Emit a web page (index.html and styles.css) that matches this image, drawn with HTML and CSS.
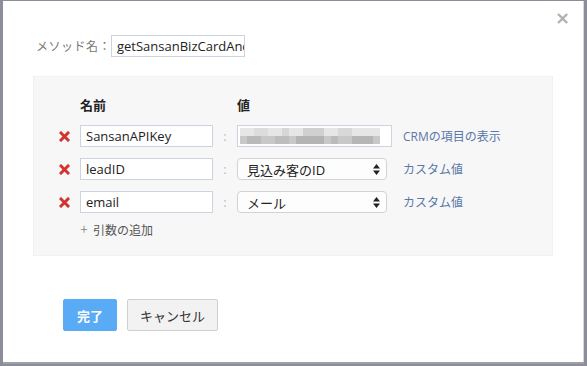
FILE: index.html
```html
<!DOCTYPE html>
<html lang="ja">
<head>
  <meta charset="utf-8" />
  <title>メソッドの編集</title>
  <link rel="stylesheet" href="styles.css">
</head>
<body>
  <div class="modal">
    <span class="close">&times;</span>

    <div class="method">
      <label class="method-label">メソッド名：</label>
      <div class="text-input method-input">getSansanBizCardAndUpdateLead</div>
    </div>

    <div class="args">
      <div class="arg-head">
        <span class="col-name">名前</span>
        <span class="col-value">値</span>
      </div>

      <div class="arg-row">
        <span class="remove"><svg width="11" height="11" viewBox="0 0 11 11"><path d="M2 2 L9 9 M9 2 L2 9" stroke="#d3322f" stroke-width="3" stroke-linecap="square"/></svg></span>
        <div class="text-input name-input">SansanAPIKey</div>
        <span class="colon">:</span>
        <div class="text-input value-input blurred">
          <svg width="140" height="16" viewBox="0 0 140 16">
            <rect x="0" y="0" width="140" height="8" fill="#e6e6e6"/>
            <rect x="14" y="0" width="14" height="8" fill="#dcdcdc"/>
            <rect x="42" y="0" width="7" height="8" fill="#d6d6d6"/>
            <rect x="63" y="0" width="21" height="8" fill="#d0d0d0"/>
            <rect x="98" y="0" width="14" height="8" fill="#d8d8d8"/>
            <rect x="0" y="8" width="140" height="8" fill="#c8c8c8"/>
            <rect x="7" y="8" width="14" height="8" fill="#b9b9b9"/>
            <rect x="35" y="8" width="14" height="8" fill="#bdbdbd"/>
            <rect x="56" y="8" width="28" height="8" fill="#b4b4b4"/>
            <rect x="91" y="8" width="7" height="8" fill="#bbbbbb"/>
            <rect x="112" y="8" width="21" height="8" fill="#b6b6b6"/>
          </svg>
        </div>
        <a class="link" href="#">CRMの項目の表示</a>
      </div>

      <div class="arg-row">
        <span class="remove"><svg width="11" height="11" viewBox="0 0 11 11"><path d="M2 2 L9 9 M9 2 L2 9" stroke="#d3322f" stroke-width="3" stroke-linecap="square"/></svg></span>
        <div class="text-input name-input">leadID</div>
        <span class="colon">:</span>
        <div class="select">見込み客のID<span class="arrows"><svg width="7" height="11" viewBox="0 0 7 11"><path d="M0 4.5 L3.5 0 L7 4.5 Z M0 6.5 L3.5 11 L7 6.5 Z" fill="#222"/></svg></span></div>
        <a class="link" href="#">カスタム値</a>
      </div>

      <div class="arg-row">
        <span class="remove"><svg width="11" height="11" viewBox="0 0 11 11"><path d="M2 2 L9 9 M9 2 L2 9" stroke="#d3322f" stroke-width="3" stroke-linecap="square"/></svg></span>
        <div class="text-input name-input">email</div>
        <span class="colon">:</span>
        <div class="select">メール<span class="arrows"><svg width="7" height="11" viewBox="0 0 7 11"><path d="M0 4.5 L3.5 0 L7 4.5 Z M0 6.5 L3.5 11 L7 6.5 Z" fill="#222"/></svg></span></div>
        <a class="link" href="#">カスタム値</a>
      </div>

      <a class="add" href="#"><span class="plus">+</span>引数の追加</a>
    </div>

    <div class="buttons">
      <button class="btn primary">完了</button>
      <button class="btn">キャンセル</button>
    </div>
  </div>
</body>
</html>
```

FILE: styles.css
```css
body {
  margin: 0;
  width: 587px;
  height: 366px;
  overflow: hidden;
  background: #8b8d9b;
  font-family: "Open Sans", "Noto Sans CJK JP", sans-serif;
  font-size: 13px;
  color: #222;
}

.modal {
  position: relative;
  box-sizing: border-box;
  margin: 1px 0 0 3px;
  width: 581px;
  height: 361px;
  background: #fff;
  border-right: 1px solid #d8d8d8;
  box-shadow: 0 2px 0 #a0a0a0;
  padding: 34px 0 0 30px;
}

.close {
  position: absolute;
  top: 6px;
  right: 13px;
  font-family: "DejaVu Sans", sans-serif;
  font-size: 18px;
  font-weight: bold;
  color: #b0b0b0;
}

.method {
  display: flex;
  align-items: center;
  padding-left: 3px;
}

.method-label {
  flex-shrink: 0;
  white-space: nowrap;
  color: #777;
  width: 75px;
  font-size: 12px;
  letter-spacing: 0.5px;
}

.text-input {
  flex-shrink: 0;
  box-sizing: border-box;
  height: 22px;
  border: 1px solid #cdd3e0;
  background: #fff;
  padding: 0 5px;
  line-height: 20px;
  white-space: nowrap;
  overflow: hidden;
}

.method-input {
  width: 134px;
  padding: 0 0 0 5px;
}

.args {
  box-sizing: border-box;
  margin-top: 19px;
  width: 520px;
  height: 180px;
  background: #f7f7f7;
  border: 1px dotted #ececec;
  padding: 19px 0 0 24px;
}

.arg-head {
  display: flex;
  font-weight: bold;
  padding-left: 22px;
  height: 29px;
  line-height: 18px;
}

.col-name {
  width: 157px;
}

.arg-row {
  display: flex;
  align-items: center;
  height: 22px;
  margin-bottom: 11px;
}

.remove {
  flex-shrink: 0;
  width: 21px;
  display: flex;
  padding-left: 1px;
}

.name-input {
  width: 133px;
}

.colon {
  flex-shrink: 0;
  width: 24px;
  text-align: center;
  color: #bbb;
}

.value-input {
  width: 155px;
  padding: 2px;
  margin-right: 11px;
}

.value-input svg {
  display: block;
}

.select {
  flex-shrink: 0;
  box-sizing: border-box;
  display: flex;
  align-items: center;
  justify-content: space-between;
  width: 150px;
  height: 22px;
  border: 1px solid #d3d3d3;
  border-radius: 4px;
  background: #fdfdfd;
  padding: 0 6px 0 9px;
  margin-right: 16px;
  white-space: nowrap;
}

.arrows {
  display: flex;
}

.link {
  white-space: nowrap;
  color: #5b78a8;
  text-decoration: none;
  font-size: 12px;
}

.add {
  display: block;
  margin: -2px 0 0 22px;
  line-height: 16px;
  color: #555;
  text-decoration: none;
  font-size: 12px;
}

.plus {
  font-size: 14px;
  font-weight: 300;
  margin-right: 5px;
}

.buttons {
  display: flex;
  gap: 10px;
  margin-top: 43px;
  padding-left: 30px;
}

.btn {
  box-sizing: border-box;
  height: 32px;
  padding: 0;
  white-space: nowrap;
  font-family: "Open Sans", "Noto Sans CJK JP", sans-serif;
  font-size: 13px;
  color: #333;
  background: #f2f2f2;
  border: 1px solid #cfcfcf;
  border-radius: 2px;
  width: 91px;
}

.btn.primary {
  width: 54px;
  background: #5aabf6;
  border-color: #5aabf6;
  color: #fff;
  font-weight: bold;
}
```
